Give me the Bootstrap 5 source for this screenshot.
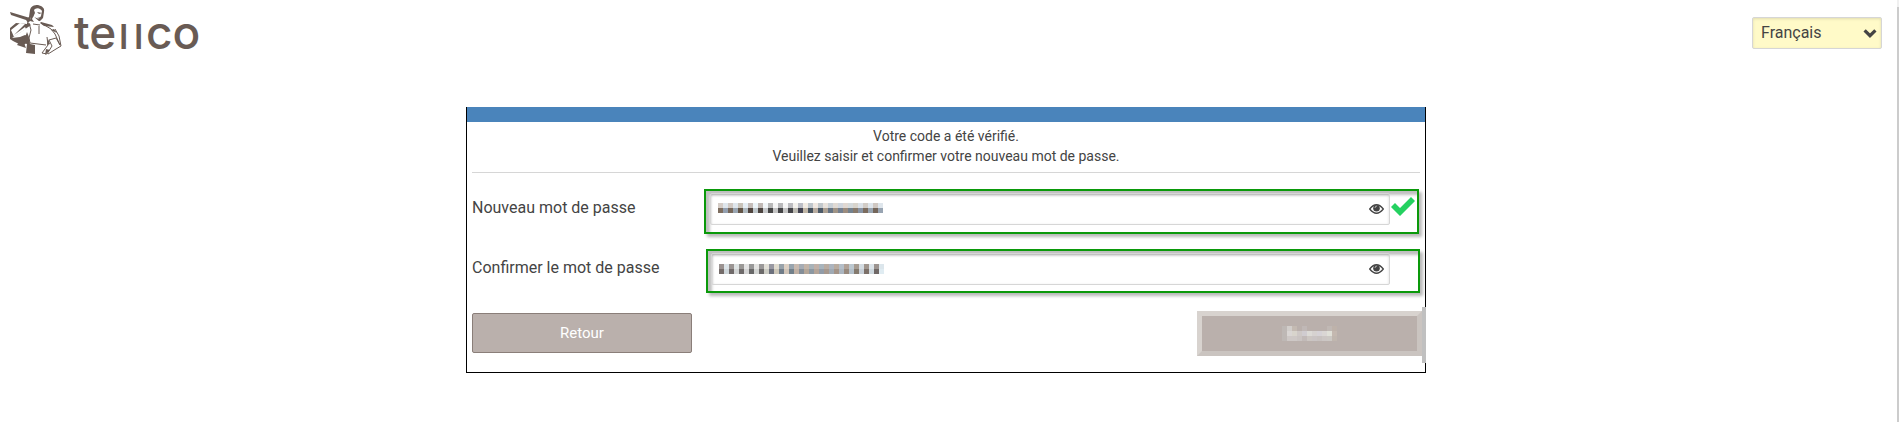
<!DOCTYPE html>
<html lang="fr">
<head>
<meta charset="utf-8">
<meta name="viewport" content="width=device-width, initial-scale=1">
<title>tellco</title>
<link rel="stylesheet" href="https://cdn.jsdelivr.net/npm/bootstrap@5.3.0/dist/css/bootstrap.min.css">
<style>
body{font-family:Roboto,"Liberation Sans",sans-serif;font-size:16px;line-height:20px;color:#444;background:#fff}
.page{min-height:100vh;padding-right:7px;background:linear-gradient(#f0f0f0 7px,#ccc 7px) right/2px 100% no-repeat}
.brand{color:#695b54;font-family:Inter,sans-serif;font-weight:500;font-size:46px;line-height:48px}
.brand .ascender{font-size:34px;margin:0 3px;font-weight:600}
.lang{width:130px;height:32px;margin:17px 10px 0 0;padding:0 8px;border:1px solid #d6d6d6;border-radius:2px;color:#444;
 background-color:#fffac8;background-position:right 4px center;background-size:14px 10px;box-shadow:inset 0 1px 3px rgba(0,0,0,.12);
 background-image:url("data:image/svg+xml,%3Csvg xmlns='http://www.w3.org/2000/svg' viewBox='0 0 13 9'%3E%3Cpath d='M1.5 2l5 5 5-5' fill='none' stroke='%23444' stroke-width='3'/%3E%3C/svg%3E")}
.panel{max-width:960px;border:1px solid #000;border-top:0;margin-top:46px}
.panel-bar{height:15px;background:#4a84bb}
.panel-body{padding:4px 5px 13px}
.intro{font-size:14px;padding-bottom:6px;border-bottom:1px solid #d6d6d6}
.field-label{width:232px;padding-top:9px}
.field-row{margin-bottom:15px}
.highlight{border:2px solid #0a990a;height:45px;padding:2px 0 0 4px;margin-right:1px;
 box-shadow:3px 3px 3px rgba(0,0,0,.28),inset 4px 4px 3px rgba(0,0,0,.25)}
.confirm{margin-bottom:14px}
.confirm .highlight{margin-left:2px;height:44px;margin-right:0;padding-left:3px}
.pwd{flex:1;height:32px}
.pwd input{height:32px;border:1px solid #d6d6d6;border-radius:2px;background:none;padding:4px 40px 4px 8px;box-shadow:inset 0 1px 3px rgba(0,0,0,.15)}
.mosaic{position:absolute;left:8px;top:10px;pointer-events:none}
.confirm .mosaic{top:11px}
.eye{position:absolute;right:6px;top:9px;line-height:0}
.state{width:27px}
.confirm .state{width:28px}
.action{width:220px;height:40px;border:1px solid #8a7e79;border-radius:2px;background:#bab0ac;color:#fff;font-size:15px;padding:0}
.next{width:225px;height:45px;border:5px solid #d8d3cf;border-right-color:#cac4c0;border-bottom-color:#cac4c0;border-radius:0;line-height:0}
.edge{width:4px;height:56px;background:#c0c0c0;margin:0 -6px -4px 0}
</style>
</head>
<body>
<div class="page">
<header class="d-flex justify-content-between align-items-start">
 <a href="#" class="d-flex text-decoration-none ps-2 pt-1" aria-label="tellco">
  <svg width="54" height="52" viewBox="0 0 54 52" fill="#695b54" aria-hidden="true">
   <path d="M2 8l20 6-1 3L3 11zM22 6c1-4 4-5 8-5 4 1 7 3 6 7l-1 6-3 3-5 1-4-2-3 3-2-3 3-3z"/>
   <path fill="#fff" d="M27 5c3-2 6 0 7 2l-1 5-2 3-5-2-2-5zM22 14l3-2 7 6-3 4-6-2z"/>
   <path d="M25 3l2 6-3 6 2 3-4-1 1-10zM29 8l5 1-3 1zM29 14l4-1-1 2zM19 18l4 3-10 7-9 6 8-1 5-2 3 1-1 6-4 4-10-5-3-2V24l6-5 11 1z"/>
   <path fill="#fff" d="M3 26l9-7 5 1-11 11 11-8 1 2-12 8z"/>
   <path d="M33 18l11 3 2 2-10-1-4-3zM19 28l2 5 1 7 5 1v9l-9-1 1-9-4-1zM14 34l-5 7 9 3z"/>
   <path d="M21 19l2 7-2 8 1 5 16 2M33 19l10 6 4 5 5 11-4-7-7 2 3 6-5 8-5-1 6-8-1-8M47 25l4 7 2 10-5 3-8 5M25 20l7 1M31 22v8" fill="none" stroke="#695b54"/>
   <path d="M46 25l3 4-6-3zM38 45l4 1-5 5zM40 35l2 5-3 1z"/>
  </svg>
  <span class="brand ms-2 mt-1 ps-1">te<span class="ascender">l</span><span class="ascender">l</span>co</span>
 </a>
 <select class="form-select lang" aria-label="Langue"><option>Français</option></select>
</header>
<main class="panel mx-auto">
 <div class="panel-bar"></div>
 <form class="panel-body">
  <p class="intro text-center mb-3">Votre code a été vérifié.<br>Veuillez saisir et confirmer votre nouveau mot de passe.</p>
  <div class="d-flex field-row">
   <label class="field-label" for="p1">Nouveau mot de passe</label>
   <div class="highlight d-flex flex-fill">
    <div class="pwd position-relative"><input class="form-control" type="password" id="p1"><svg class="mosaic" width="165" height="10" data-tiles="first" aria-hidden="true"></svg>
     <button type="button" class="btn p-0 border-0 eye" aria-label="Afficher"><svg width="15" height="14" viewBox="0 0 15 14"><path d="M.7 7q6.800-8.500 13.600 0q-6.800 8.500-13.600 0z" fill="#fff" stroke="#444" stroke-width="1.300"/><circle cx="7.500" cy="6.300" r="3.300" fill="#444"/><path d="M6 6q0-2 2-2" stroke="#ddd" stroke-width=".7" fill="none"/></svg></button></div>
    <div class="state"><svg width="27" height="20" viewBox="0 0 27 20" class="mt-1"><path d="M1 10l4-4 5 5L21 0l4 4-15 15z" fill="#24d160"/></svg></div>
   </div>
  </div>
  <div class="d-flex confirm">
   <label class="field-label" for="p2">Confirmer le mot de passe</label>
   <div class="highlight d-flex flex-fill">
    <div class="pwd position-relative"><input class="form-control" type="password" id="p2"><svg class="mosaic" width="165" height="10" data-tiles="second" aria-hidden="true"></svg>
     <button type="button" class="btn p-0 border-0 eye" aria-label="Afficher"><svg width="15" height="14" viewBox="0 0 15 14"><path d="M.7 7q6.800-8.500 13.600 0q-6.800 8.500-13.600 0z" fill="#fff" stroke="#444" stroke-width="1.300"/><circle cx="7.500" cy="6.300" r="3.300" fill="#444"/><path d="M6 6q0-2 2-2" stroke="#ddd" stroke-width=".7" fill="none"/></svg></button></div>
    <div class="state"></div>
   </div>
  </div>
  <div class="d-flex align-items-center justify-content-between">
   <button type="button" class="btn action">Retour</button>
   <div class="d-flex align-items-center"><button type="submit" class="btn action next" aria-label="Suivant"><svg width="55" height="15" data-tiles="next" aria-hidden="true"></svg></button><div class="edge"></div></div>
  </div>
 </form>
</main>
</div>
<script src="https://cdn.jsdelivr.net/npm/bootstrap@5.3.0/dist/js/bootstrap.bundle.min.js"></script>
<script>
const tiles = {
 first: [
  'd4ccc6 dfe6ec d0c8c2 dfe6ec c8c2b8 e6eef4 c4bcb8 ecf4f8 c0b8b4 f2f6f8 b8b8b8 f6f6f6 b8b8ba f6f6f6 bcbcc0 f4f2ee bcbec6 f2ece4 bfc6cc f0e8e2 c2c8cc e8e2dc c8d0d6 e0dad4 d0d6de e0d8d2 d4dadc d8d4cc dce2e8 d2ccc6 dfe6ec d0c8c2 dfe6ec',
  '7e6e60 94a0b0 76675a 9aa6b2 625446 b0bac0 50443e bec6ca 4c4440 c6c8ca 464646 c4c4c4 444446 c4c4c4 444448 bcbab2 424250 c0b6a6 46525e b8aca0 4c5a68 aca092 667484 a09486 748090 9c8c7e 74828e 887a6c 8894a4 7c6c5e 98a4b0 74665a 98a4b2'],
 second: [
  '9a9290 dce4e8 9a9492 dfe4e4 9a9896 e4e4e4 989898 e4e4e2 9a9898 e2e0d8 9898a2 e0dcd0 98a2aa dcd0c4 98a4ae c8bab0 a6acb4 c2b4a8 a8b2b8 c0b0a8 a8b4bc b8aca2 acb4be b8aca0 b4bec8 b0a298 bcc8d0 a69c92 d4dce2 a0968e dce4ea 9c9490 dce6ec',
  '746c6a ced6da 706a6a d2d4d4 6e6a6a d4d4d4 686868 d2d4d2 6c6a6a ccccc4 6c707c ccc6b8 707c88 d0c4b8 72808a c0b0a4 848e98 b4a698 8c98a2 b4a498 929ca8 a6988e a0aab4 a49488 acb6c0 988a7e b4c0ca 847a6e c8d0d8 7c7068 ced8de 706866 e0ecf2'],
 next: [
  'beb8b5 d2cecb c4bab2 bab0ac c0b8b6 bab0ac bab0ac bab0ac bab0ac c0b8b4 beb2aa',
  'beb8b5 dad6d4 d8d4cc cec8c6 d0ccd0 dcdad6 d6d2d0 d6d2d6 dad6d4 e0e0d8 c4b8b0',
  'beb8b5 cec8c6 cec8c6 cac4c2 c2bab8 ccc6c2 cac4c4 c8c2c0 ccc6c4 ccc8c4 c0b6ae']
};
document.querySelectorAll('[data-tiles]').forEach(svg => {
 svg.innerHTML = tiles[svg.dataset.tiles].map((row, y) => row.split(' ').map((c, x) =>
  `<rect x="${x*5}" y="${y*5}" width="5" height="5" fill="#${c}"/>`).join('')).join('');
});
</script>
</body>
</html>
